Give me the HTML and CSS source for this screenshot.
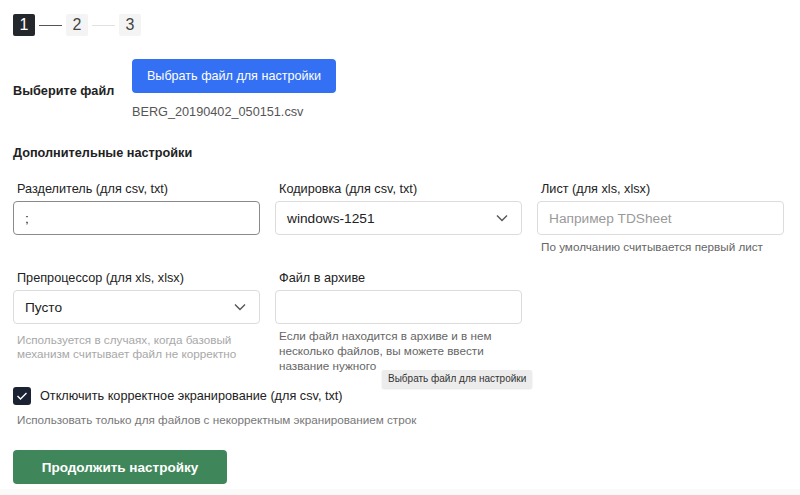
FILE: index.html
```html
<!DOCTYPE html>
<html lang="ru">
<head>
<meta charset="utf-8">
<title>Настройка импорта</title>
<link rel="stylesheet" href="styles.css">
</head>
<body>
<main class="page">
  <div class="steps">
    <span class="step step--active">1</span>
    <span class="step-line step-line--done"></span>
    <span class="step">2</span>
    <span class="step-line"></span>
    <span class="step">3</span>
  </div>

  <section class="file-row">
    <div class="file-label">Выберите файл</div>
    <div class="file-pick">
      <button class="btn btn--blue">Выбрать файл для настройки</button>
      <div class="file-name">BERG_20190402_050151.csv</div>
    </div>
  </section>

  <h3 class="section-title">Дополнительные настройки</h3>

  <div class="grid">
    <div class="field">
      <label class="label">Разделитель (для csv, txt)</label>
      <div class="input input--focus">;</div>
    </div>
    <div class="field">
      <label class="label">Кодировка (для csv, txt)</label>
      <div class="input select">windows-1251
        <svg class="chev" width="12" height="8" viewBox="0 0 12 8"><path d="M1 1.5 L6 6.5 L11 1.5" fill="none" stroke="#555" stroke-width="1.4"/></svg>
      </div>
    </div>
    <div class="field">
      <label class="label">Лист (для xls, xlsx)</label>
      <div class="input placeholder">Например TDSheet</div>
      <div class="helper">По умолчанию считывается первый лист</div>
    </div>
    <div class="field">
      <label class="label">Препроцессор (для xls, xlsx)</label>
      <div class="input select">Пусто
        <svg class="chev" width="12" height="8" viewBox="0 0 12 8"><path d="M1 1.5 L6 6.5 L11 1.5" fill="none" stroke="#555" stroke-width="1.4"/></svg>
      </div>
      <div class="helper helper--muted">Используется в случаях, когда базовый механизм считывает файл не корректно</div>
    </div>
    <div class="field field--tip">
      <label class="label">Файл в архиве</label>
      <div class="input"></div>
      <div class="helper helper--wide">Если файл находится в архиве и в нем несколько файлов, вы можете ввести название нужного</div>
      <div class="tooltip">Выбрать файл для настройки</div>
    </div>
  </div>

  <div class="check-row">
    <span class="checkbox">
      <svg width="12" height="10" viewBox="0 0 12 10"><path d="M1.5 5 L4.5 8 L10.5 2" fill="none" stroke="#fff" stroke-width="1.4"/></svg>
    </span>
    <span class="check-label">Отключить корректное экранирование (для csv, txt)</span>
  </div>
  <div class="helper helper--check">Использовать только для файлов с некорректным экранированием строк</div>

  <button class="btn btn--green">Продолжить настройку</button>
</main>
</body>
</html>
```

FILE: styles.css
```css
* { box-sizing: border-box; }
html, body { margin: 0; padding: 0; }
body {
  background: #fafafa;
  font-family: "Liberation Sans", Arial, sans-serif;
  color: #222;
}
.page {
  background: #fff;
  padding: 14px 16px 5px 13px;
}
.steps {
  display: flex;
  align-items: center;
  gap: 4px;
  height: 22px;
}
.step {
  width: 22px;
  height: 22px;
  border-radius: 2px;
  background: #f4f4f4;
  color: #444;
  font-size: 16px;
  display: flex;
  align-items: center;
  justify-content: center;
}
.step--active {
  background: #24272b;
  color: #fff;
}
.step-line {
  width: 23px;
  height: 1px;
  background: #e2e2e2;
}
.step-line--done { background: #555; }

.file-row {
  display: flex;
  align-items: center;
  margin-top: 23px;
}
.file-label {
  width: 119px;
  font-size: 12.7px;
  font-weight: bold;
  color: #222;
  padding-top: 2px;
}
.file-pick {
  display: flex;
  flex-direction: column;
}
.btn {
  border: none;
  font-family: inherit;
  color: #fff;
  border-radius: 4px;
  cursor: pointer;
}
.btn--blue {
  width: 204px;
  height: 34px;
  background: #3470f3;
  font-size: 12.6px;
}
.file-name {
  margin-top: 11px;
  font-size: 12.7px;
  line-height: 16px;
  color: #555;
}
.section-title {
  margin: 25px 0 0;
  font-size: 12.7px;
  line-height: 16px;
  font-weight: bold;
  color: #222;
}
.grid {
  display: grid;
  grid-template-columns: repeat(3, 247px);
  column-gap: 15px;
  row-gap: 16px;
  margin-top: 20px;
}
.field { display: flex; flex-direction: column; }
.field--tip { position: relative; }
.label {
  display: block;
  padding-left: 4px;
  font-size: 12.7px;
  line-height: 16px;
  margin-bottom: 4px;
  color: #222;
}
.input {
  height: 34px;
  border: 1px solid #dcdcdc;
  border-radius: 4px;
  padding: 0 11px;
  display: flex;
  align-items: center;
  font-size: 13.7px;
  color: #222;
  background: #fff;
}
.input--focus { border-color: #8a8a8a; }
.select { justify-content: space-between; }
.chev { margin-right: 2px; }
.placeholder { color: #9a9a9a; }
.helper {
  margin-top: 4px;
  padding-left: 4px;
  font-size: 11.7px;
  line-height: 15px;
  color: #666;
}
.helper--muted {
  margin-top: 9px;
  line-height: 14px;
  color: #a8a8a8;
}
.helper--wide { padding-right: 20px; }
.tooltip {
  position: absolute;
  left: 107px;
  top: 100px;
  height: 18px;
  padding: 0 6px;
  background: #ececec;
  color: #333;
  font-size: 10px;
  line-height: 18px;
  border-radius: 2px;
  white-space: nowrap;
  box-shadow: 0 1px 2px rgba(0,0,0,0.12);
}
.check-row {
  display: flex;
  align-items: center;
  gap: 9px;
  margin-top: 14px;
}
.checkbox {
  width: 18px;
  height: 18px;
  border-radius: 3px;
  background: #1b2233;
  display: flex;
  align-items: center;
  justify-content: center;
}
.check-label { font-size: 12.7px; color: #222; }
.helper--check {
  margin-top: 7px;
  color: #777;
}
.btn--green {
  display: block;
  margin-top: 23px;
  width: 214px;
  height: 34px;
  background: #3f875a;
  font-size: 13.5px;
  font-weight: bold;
}
```
